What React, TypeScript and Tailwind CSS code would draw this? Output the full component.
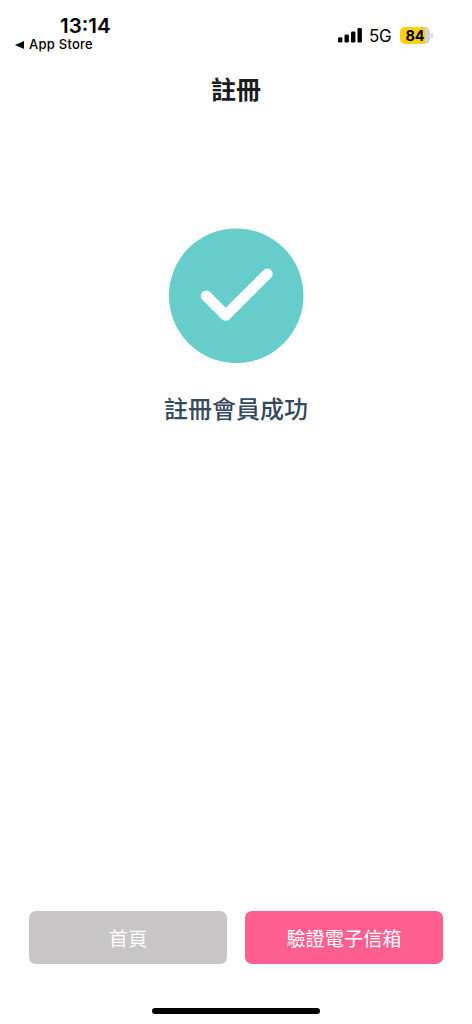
const signalBars = [
  { x: 0, y: 9.2, height: 5.3 },
  { x: 6.5, y: 6.6, height: 7.9 },
  { x: 13, y: 3.4, height: 11.1 },
  { x: 19.5, y: 0, height: 14.5 },
]

function StatusBar() {
  return (
    <div className="h-16 flex justify-between font-['Inter',sans-serif] text-black">
      <div className="pl-[15px] pt-[15px]">
        <div className="pl-[45px] text-[20.5px] leading-[22px] font-semibold">13:14</div>
        <div className="flex items-center gap-[5px] h-[15px]">
          <svg width="9" height="8" viewBox="0 0 9 8">
            <path d="M0 4L9 0V8Z" fill="currentColor" />
          </svg>
          <span className="text-[13px] leading-[15px] font-medium tracking-[0.25px]">App Store</span>
        </div>
      </div>
      <div className="flex items-center h-[18px] mt-[26px] pr-[41px]">
        <svg width="24" height="15" viewBox="0 0 24 15">
          {signalBars.map((bar) => (
            <rect key={bar.x} x={bar.x} y={bar.y} width="4.4" height={bar.height} rx="1.3" fill="currentColor" />
          ))}
        </svg>
        <span className="ml-[7px] w-[23px] text-[17px] leading-[18px] tracking-[-0.3px] pt-px">5G</span>
        <div className="ml-[8px] w-[30px] h-[17px] rounded-[5px] bg-[linear-gradient(to_right,#fbd014_25px,#d3d2d4_25px)] text-center text-[14.5px] leading-[17px] font-bold">
          84
        </div>
        <div className="ml-px -mr-[2px] w-[2px] h-[5px] rounded-r-full bg-[#d3d2d4]" />
      </div>
    </div>
  )
}

function SuccessIcon() {
  return (
    <svg width="136" height="136" viewBox="0 0 136 136">
      <circle cx="68.2" cy="67.7" r="67.3" fill="#67cdcb" />
      <path
        d="M38.2 67.9L57.7 87.4L99.3 46"
        fill="none"
        stroke="white"
        strokeWidth="10.8"
        strokeLinecap="round"
        strokeLinejoin="round"
      />
    </svg>
  )
}

export default function App() {
  return (
    <div className="w-[472px] h-[1024px] flex flex-col bg-white overflow-hidden font-['Noto_Sans_CJK_TC',sans-serif]">
      <StatusBar />
      <h1 className="h-[49px] text-center text-[25px] leading-[49px] font-bold text-[#1c1c1e]">註冊</h1>

      <main className="flex-1 flex flex-col items-center pt-[115px]">
        <SuccessIcon />
        <p className="mt-[26px] text-[24px] leading-9 font-medium text-[#34495e]">註冊會員成功</p>
      </main>

      <div className="flex gap-[18px] px-[29px] text-[19.2px] text-white">
        <button className="flex-1 h-[53px] pt-[2px] rounded-[7px] bg-[#c8c5c6]">首頁</button>
        <button className="flex-1 h-[53px] pt-[2px] rounded-[7px] bg-[#ff5f90]">驗證電子信箱</button>
      </div>
      <div className="flex justify-center pt-[44px] pb-[10px]">
        <div className="w-[168px] h-[6px] rounded-full bg-black" />
      </div>
    </div>
  )
}
